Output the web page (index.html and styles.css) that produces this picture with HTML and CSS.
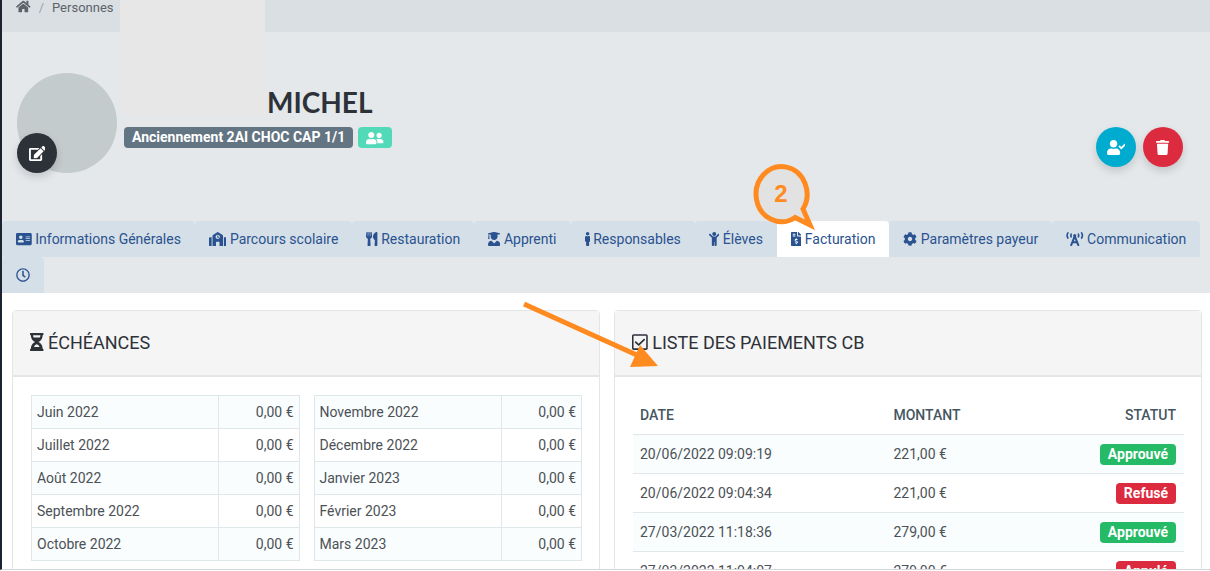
FILE: index.html
```html
<!DOCTYPE html>
<html lang="fr">
<head>
<meta charset="utf-8">
<title>Facturation - MICHEL</title>
<link rel="stylesheet" href="styles.css">
</head>
<body>
<div class="app">
  <header class="page-head">
    <nav class="breadcrumb" aria-label="Fil d'Ariane">
      <a href="#" aria-label="Accueil"><svg class="icon" viewBox="0 0 576 512"><path d="M280.37 148.26L96 300.11V464a16 16 0 0 0 16 16l112.06-.29a16 16 0 0 0 15.92-16V368a16 16 0 0 1 16-16h64a16 16 0 0 1 16 16v95.64a16 16 0 0 0 16 16.05L464 480a16 16 0 0 0 16-16V300L295.67 148.26a12.19 12.19 0 0 0-15.3 0zM571.6 251.47L488 182.56V44.05a12 12 0 0 0-12-12h-56a12 12 0 0 0-12 12v72.61L318.47 43a48 48 0 0 0-61 0L4.34 251.47a12 12 0 0 0-1.6 16.9l25.5 31A12 12 0 0 0 45.15 301l235.22-193.74a12.19 12.19 0 0 1 15.3 0L530.9 301a12 12 0 0 0 16.9-1.6l25.5-31a12 12 0 0 0-1.7-16.93z"/></svg></a>
      <span class="sep">/</span>
      <a href="#">Personnes</a>
      <span class="sep">/</span>
    </nav>
    <div class="profile">
      <div class="avatar">
        <button class="round dark" type="button" aria-label="Modifier la photo"><svg class="icon" viewBox="0 0 576 512"><path d="M402.6 83.2l90.2 90.2c3.8 3.8 3.8 10 0 13.8L274.4 405.6l-92.8 10.3c-12.4 1.4-22.9-9.1-21.5-21.5l10.3-92.8L388.8 83.2c3.8-3.8 10-3.8 13.8 0zm162-22.9l-48.8-48.8c-15.2-15.2-39.9-15.2-55.2 0l-35.4 35.4c-3.8 3.8-3.8 10 0 13.8l90.2 90.2c3.8 3.8 10 3.8 13.8 0l35.4-35.4c15.2-15.3 15.2-40 0-55.2zM384 346.2V448H64V128h229.8c3.2 0 6.2-1.3 8.5-3.5l40-40c7.6-7.6 2.2-20.5-8.5-20.5H48C21.5 64 0 85.500 0 112v352c0 26.5 21.5 48 48 48h352c26.5 0 48-21.5 48-48V306.2c0-10.7-12.9-16-20.5-8.5l-40 40c-2.2 2.3-3.5 5.3-3.5 8.5z"/></svg></button>
      </div>
      <div class="identity">
        <h1>MICHEL</h1>
        <div class="tags">
          <span class="badge slate">Anciennement 2AI CHOC CAP 1/1</span>
          <span class="badge mint"><svg class="icon" viewBox="0 0 640 512"><path d="M192 256c61.9 0 112-50.1 112-112S253.9 32 192 32 80 82.1 80 144s50.1 112 112 112zm76.8 32h-8.3c-20.8 10-43.9 16-68.5 16s-47.6-6-68.5-16h-8.3C51.600 288 0 339.600 0 403.200V432c0 26.500 21.500 48 48 48h288c26.500 0 48-21.500 48-48v-28.800c0-63.600-51.600-115.200-115.200-115.200zM480 256c53 0 96-43 96-96s-43-96-96-96-96 43-96 96 43 96 96 96zm48 32h-3.800c-13.900 4.800-28.600 8-44.200 8s-30.300-3.200-44.200-8H432c-20.400 0-39.200 5.900-55.700 15.400 24.400 26.300 39.700 61.200 39.700 99.800v38.400c0 2.200-.5 4.300-.6 6.400H592c26.500 0 48-21.500 48-48 0-61.900-50.100-112-112-112z"/></svg></span>
        </div>
      </div>
      <div class="actions">
        <button class="round cyan" type="button" aria-label="Valider la personne"><svg class="icon" viewBox="0 0 640 512"><path d="M224 256c70.7 0 128-57.3 128-128S294.7 0 224 0 96 57.3 96 128s57.3 128 128 128zm89.6 32h-16.700c-22.200 10.200-46.900 16-72.900 16s-50.600-5.800-72.900-16h-16.700C60.200 288 0 348.200 0 422.400V464c0 26.500 21.500 48 48 48h352c26.500 0 48-21.500 48-48v-41.600c0-74.200-60.200-134.400-134.400-134.400zm323-128.400l-27.800-28.100c-4.600-4.700-12.100-4.700-16.800-.1l-104.800 104-45.500-45.800c-4.600-4.700-12.100-4.700-16.800-.1l-28.100 27.900c-4.700 4.600-4.700 12.100-.1 16.800l81.700 82.300c4.600 4.700 12.100 4.700 16.800.1l141.300-140.200c4.600-4.700 4.700-12.200.1-16.800z"/></svg></button>
        <button class="round red" type="button" aria-label="Supprimer"><svg class="icon" viewBox="0 0 448 512"><path d="M432 32H312l-9.400-18.700A24 24 0 0 0 281.100 0H166.800a23.720 23.720 0 0 0-21.400 13.300L136 32H16A16 16 0 0 0 0 48v32a16 16 0 0 0 16 16h416a16 16 0 0 0 16-16V48a16 16 0 0 0-16-16zM53.200 467a48 48 0 0 0 47.900 45h245.800a48 48 0 0 0 47.900-45L416 128H32z"/></svg></button>
      </div>
    </div>
    <nav class="tabs" aria-label="Sections">
      <a class="tab" href="#"><svg class="icon" viewBox="0 0 576 512"><path d="M528 32H48C21.5 32 0 53.5 0 80v352c0 26.5 21.5 48 48 48h480c26.5 0 48-21.5 48-48V80c0-26.5-21.5-48-48-48zm-352 96c35.3 0 64 28.7 64 64s-28.7 64-64 64-64-28.7-64-64 28.7-64 64-64zm112 236.8c0 10.6-10 19.2-22.4 19.2H86.4C74 384 64 375.4 64 364.8v-19.2c0-31.8 30.1-57.6 67.2-57.6h5c12.3 5.1 25.7 8 39.8 8s27.6-2.9 39.8-8h5c37.1 0 67.2 25.8 67.2 57.6v19.2zM512 312c0 4.400-3.600 8-8 8H360c-4.400 0-8-3.600-8-8v-16c0-4.400 3.600-8 8-8h144c4.400 0 8 3.600 8 8v16zm0-64c0 4.400-3.600 8-8 8H360c-4.400 0-8-3.600-8-8v-16c0-4.400 3.600-8 8-8h144c4.400 0 8 3.600 8 8v16zm0-64c0 4.400-3.600 8-8 8H360c-4.400 0-8-3.600-8-8v-16c0-4.400 3.600-8 8-8h144c4.400 0 8 3.600 8 8v16z"/></svg> Informations Générales</a>
      <a class="tab" href="#"><svg class="icon" viewBox="0 0 640 512"><path d="M0 224v272c0 8.840 7.160 16 16 16h80V192H32c-17.670 0-32 14.330-32 32zm360-48h-24v-40c0-4.420-3.580-8-8-8h-16c-4.420 0-8 3.580-8 8v64c0 4.420 3.580 8 8 8h48c4.420 0 8-3.580 8-8v-16c0-4.420-3.580-8-8-8zm137.750-63.960l-160-106.670a32.020 32.020 0 0 0-35.500 0l-160 106.670A32.002 32.002 0 0 0 128 138.660V512h128V368c0-8.840 7.160-16 16-16h96c8.840 0 16 7.160 16 16v144h128V138.670c0-10.700-5.350-20.690-14.250-26.630zM320 256c-44.180 0-80-35.820-80-80s35.820-80 80-80 80 35.820 80 80-35.820 80-80 80zm288-64h-64v320h80c8.840 0 16-7.160 16-16V224c0-17.670-14.330-32-32-32z"/></svg> Parcours scolaire</a>
      <a class="tab" href="#"><svg class="icon" viewBox="0 0 416 512"><path d="M207.9 15.2c.8 4.7 16.1 94.5 16.1 128.8 0 52.3-27.8 89.6-68.9 104.6L168 486.700c.7 13.700-10.200 25.300-24 25.300H80c-13.700 0-24.700-11.500-24-25.300l12.900-238.100C27.700 233.600 0 196.200 0 144 0 109.600 15.300 19.900 16.100 15.200 19.300-5.100 61.400-5.400 64 16.300v141.200c1.300 3.400 15.100 3.200 16 0 1.400-25.300 7.900-139.200 8-141.800 3.300-20.800 44.700-20.800 47.900 0 .2 2.700 6.600 116.500 8 141.800.9 3.200 14.800 3.400 16 0V16.300c2.600-21.600 44.800-21.400 48-1.100zm119.200 285.700l-15 185.100c-1.200 14 9.900 26 23.900 26h56c13.300 0 24-10.700 24-24V24c0-13.200-10.700-24-24-24-82.500 0-221.400 178.500-64.900 300.900z"/></svg> Restauration</a>
      <a class="tab" href="#"><svg class="icon" viewBox="0 0 448 512"><path d="M319.4 320.6L224 416l-95.4-95.4C57.1 323.7 0 382.2 0 454.4v9.6c0 26.5 21.5 48 48 48h352c26.5 0 48-21.5 48-48v-9.6c0-72.2-57.1-130.7-128.6-133.8zM13.6 79.8l6.4 1.5v58.4c-7 4.2-12 11.5-12 20.3 0 8.4 4.6 15.4 11.1 19.7L3.5 242c-1.7 6.9 2.1 14 7.6 14h41.8c5.5 0 9.3-7.1 7.6-14l-15.6-62.3C51.4 175.4 56 168.4 56 160c0-8.8-5-16.1-12-20.3V87.1l66 15.9c-8.6 17.2-14 36.4-14 57 0 70.7 57.3 128 128 128s128-57.3 128-128c0-20.6-5.3-39.8-14-57l96.3-23.2c18.2-4.4 18.2-27.1 0-31.5l-190.400-46c-13-3.100-26.700-3.100-39.700 0L13.600 48.200c-18.100 4.400-18.100 27.200 0 31.600z"/></svg> Apprenti</a>
      <a class="tab" href="#"><svg class="icon" viewBox="0 0 192 512"><path d="M96 0c35.346 0 64 28.654 64 64s-28.654 64-64 64-64-28.654-64-64S60.654 0 96 0m48 144h-11.360c-22.711 10.443-49.590 10.894-73.280 0H48c-26.510 0-48 21.490-48 48v136c0 13.255 10.745 24 24 24h16v136c0 13.255 10.745 24 24 24h64c13.255 0 24-10.745 24-24V352h16c13.255 0 24-10.745 24-24V192c0-26.510-21.490-48-48-48z"/></svg> Responsables</a>
      <a class="tab" href="#"><svg class="icon" viewBox="0 0 384 512"><path d="M120 72c0-39.765 32.235-72 72-72s72 32.235 72 72c0 39.764-32.235 72-72 72s-72-32.236-72-72zm254.627 1.373c-12.496-12.497-32.758-12.497-45.254 0L242.745 160H141.254L54.627 73.373c-12.496-12.497-32.758-12.497-45.254 0-12.497 12.497-12.497 32.758 0 45.255L104 213.254V480c0 17.673 14.327 32 32 32h16c17.673 0 32-14.327 32-32V368h16v112c0 17.673 14.327 32 32 32h16c17.673 0 32-14.327 32-32V213.254l94.627-94.626c12.497-12.497 12.497-32.757 0-45.255z"/></svg> Élèves</a>
      <a class="tab active" href="#" aria-current="page"><svg class="icon" viewBox="0 0 384 512"><path d="M377 105L279.1 7c-4.5-4.5-10.6-7-17-7H256v128h128v-6.1c0-6.3-2.5-12.4-7-16.9zm-153 31V0H24C10.7 0 0 10.7 0 24v464c0 13.3 10.7 24 24 24h336c13.3 0 24-10.7 24-24V160H248c-13.2 0-24-10.8-24-24zM64 72c0-4.42 3.58-8 8-8h80c4.42 0 8 3.58 8 8v16c0 4.42-3.58 8-8 8H72c-4.42 0-8-3.58-8-8V72zm0 80v-16c0-4.42 3.58-8 8-8h80c4.42 0 8 3.58 8 8v16c0 4.42-3.58 8-8 8H72c-4.42 0-8-3.58-8-8zm144 263.880V440c0 4.420-3.580 8-8 8h-16c-4.420 0-8-3.580-8-8v-24.290c-11.290-.58-22.270-4.520-31.370-11.350-3.900-2.930-4.100-8.770-.57-12.140l11.750-11.210c2.770-2.640 6.890-2.760 10.130-.73 3.870 2.420 8.260 3.720 12.820 3.720h28.110c6.500 0 11.800-5.920 11.800-13.190 0-5.950-3.610-11.190-8.770-12.730l-45-13.500c-18.590-5.580-31.580-23.420-31.580-43.390 0-24.520 19.050-44.440 42.670-45.070V232c0-4.420 3.580-8 8-8h16c4.420 0 8 3.580 8 8v24.290c11.290.58 22.270 4.510 31.370 11.350 3.900 2.930 4.100 8.770.57 12.140l-11.750 11.210c-2.770 2.640-6.890 2.760-10.130.73-3.870-2.430-8.260-3.720-12.820-3.720h-28.110c-6.500 0-11.800 5.920-11.800 13.190 0 5.950 3.610 11.190 8.770 12.730l45 13.500c18.590 5.580 31.580 23.420 31.580 43.390 0 24.530-19.050 44.440-42.670 45.070z"/></svg> Facturation</a>
      <a class="tab" href="#"><svg class="icon" viewBox="0 0 512 512"><path d="M487.4 315.7l-42.6-24.6c4.3-23.2 4.3-47 0-70.2l42.6-24.6c4.9-2.8 7.1-8.6 5.5-14-11.1-35.6-30-67.8-54.7-94.6-3.8-4.1-10-5.1-14.8-2.3L380.8 110c-17.9-15.4-38.5-27.3-60.8-35.1V25.8c0-5.6-3.9-10.5-9.4-11.7-36.7-8.2-74.3-7.8-109.2 0-5.5 1.2-9.4 6.1-9.4 11.7V75c-22.2 7.9-42.8 19.8-60.8 35.1L88.7 85.5c-4.9-2.8-11-1.9-14.8 2.3-24.7 26.7-43.6 58.9-54.7 94.6-1.7 5.4.6 11.2 5.5 14L67.3 221c-4.3 23.2-4.3 47 0 70.2l-42.6 24.6c-4.9 2.8-7.1 8.6-5.5 14 11.1 35.6 30 67.8 54.7 94.6 3.8 4.1 10 5.1 14.8 2.3l42.6-24.6c17.9 15.4 38.5 27.3 60.8 35.1v49.2c0 5.6 3.9 10.5 9.4 11.7 36.7 8.2 74.3 7.8 109.2 0 5.5-1.2 9.4-6.1 9.4-11.7v-49.2c22.2-7.9 42.8-19.8 60.8-35.1l42.6 24.6c4.9 2.8 11 1.9 14.8-2.3 24.7-26.7 43.6-58.9 54.7-94.6 1.5-5.5-.7-11.3-5.6-14.1zM256 336c-44.100 0-80-35.900-80-80s35.900-80 80-80 80 35.900 80 80-35.900 80-80 80z"/></svg> Paramètres payeur</a>
      <a class="tab" href="#"><svg class="icon line" viewBox="0 0 640 512"><path stroke-width="72" d="M190 480L320 150L450 480M235 375H405"/><circle cx="320" cy="125" r="56" fill="currentColor" stroke="none"/><path stroke-width="60" d="M70 32Q10 125 70 220M570 32Q630 125 570 220M190 76Q160 125 190 176M450 76Q480 125 450 176"/></svg> Communication</a>
      <a class="tab" href="#" aria-label="Historique"><svg class="icon" viewBox="0 0 512 512"><path d="M256 8C119 8 8 119 8 256s111 248 248 248 248-111 248-248S393 8 256 8zm0 448c-110.5 0-200-89.5-200-200S145.5 56 256 56s200 89.5 200 200-89.5 200-200 200zm61.8-104.4l-84.9-61.7c-3.1-2.3-4.9-5.9-4.9-9.7V116c0-6.6 5.4-12 12-12h32c6.6 0 12 5.4 12 12v141.7l66.8 48.6c5.4 3.9 6.5 11.4 2.6 16.8L334.600 349c-3.900 5.300-11.400 6.500-16.800 2.600z"/></svg></a>
    </nav>
  </header>

  <main class="panels">
    <section class="card">
      <h2><svg class="icon" viewBox="0 0 384 512"><path fill-rule="evenodd" d="M20 0H364Q384 0 384 20V44Q384 64 360 64C360 155 310 225 240 256C310 287 360 357 360 448Q384 448 384 468V492Q384 512 364 512H20Q0 512 0 492V468Q0 448 24 448C24 357 74 287 144 256C74 225 24 155 24 64Q0 64 0 44V20Q0 0 20 0ZM88 64Q90 98 104 128H280Q294 98 296 64ZM110 400H274Q240 320 192 320Q144 320 110 400Z"/></svg> ÉCHÉANCES</h2>
      <div class="card-body months">
        <table class="grid">
          <tr><td>Juin 2022</td><td class="sum">0,00 €</td></tr>
          <tr><td>Juillet 2022</td><td class="sum">0,00 €</td></tr>
          <tr><td>Août 2022</td><td class="sum">0,00 €</td></tr>
          <tr><td>Septembre 2022</td><td class="sum">0,00 €</td></tr>
          <tr><td>Octobre 2022</td><td class="sum">0,00 €</td></tr>
        </table>
        <table class="grid">
          <tr><td>Novembre 2022</td><td class="sum">0,00 €</td></tr>
          <tr><td>Décembre 2022</td><td class="sum">0,00 €</td></tr>
          <tr><td>Janvier 2023</td><td class="sum">0,00 €</td></tr>
          <tr><td>Février 2023</td><td class="sum">0,00 €</td></tr>
          <tr><td>Mars 2023</td><td class="sum">0,00 €</td></tr>
        </table>
      </div>
    </section>
    <section class="card">
      <h2><svg class="icon line" viewBox="0 0 448 512"><rect x="22" y="54" width="404" height="404" rx="26" stroke-width="44"/><path stroke-width="48" d="M104 258L190 340L346 186"/></svg> LISTE DES PAIEMENTS CB</h2>
      <div class="card-body">
        <table class="payments">
          <thead><tr><th>DATE</th><th>MONTANT</th><th class="state">STATUT</th></tr></thead>
          <tbody>
            <tr><td>20/06/2022 09:09:19</td><td>221,00 €</td><td class="state"><span class="badge green">Approuvé</span></td></tr>
            <tr><td>20/06/2022 09:04:34</td><td>221,00 €</td><td class="state"><span class="badge red">Refusé</span></td></tr>
            <tr><td>27/03/2022 11:18:36</td><td>279,00 €</td><td class="state"><span class="badge green">Approuvé</span></td></tr>
            <tr><td>27/03/2022 11:04:07</td><td>279,00 €</td><td class="state"><span class="badge red">Annulé</span></td></tr>
          </tbody>
        </table>
      </div>
    </section>
  </main>
</div>

<div class="mask"></div>
<svg class="callout" viewBox="0 0 64 70" width="64" height="70">
  <path d="M42 54.500A25.500 27.500 0 1 1 50 46L57 62Z" fill="#e2e2e2" stroke="#ff8a20" stroke-width="5" stroke-miterlimit="10"/>
  <text x="28" y="39" text-anchor="middle">2</text>
</svg>
<svg class="arrow" viewBox="0 0 140 72" width="140" height="72">
  <path d="M5 5L120 57" stroke="#ff8a20" stroke-width="5"/>
  <path d="M139 67L111 68L121 46Z" fill="#ff8a20"/>
</svg>
</body>
</html>
```
FILE: styles.css
```css
* { box-sizing: border-box; }

body {
  margin: 0;
  height: 100vh;
  padding-bottom: 1px;
  overflow: hidden;
  position: relative;
  background: #fff;
  color: #4c5156;
  font: 14px/21px Roboto, "Liberation Sans", sans-serif;
}

a { color: inherit; text-decoration: none; }

.app {
  height: 100%;
  overflow: hidden;
  border-left: 2px solid #1b2230;
  border-bottom: 1px solid #d5d7d9;
}

.icon { height: 1em; width: auto; fill: currentColor; }
.icon.line { fill: none; stroke: currentColor; stroke-linecap: round; stroke-linejoin: round; }

.page-head { background: #e4e8eb; }

.breadcrumb {
  display: flex;
  gap: 8px;
  height: 32px;
  padding: 0 14px;
  background: #d9dfe3;
  color: #5c6369;
  font-size: 13px;
  line-height: 16px;
}
.breadcrumb .icon { height: 13px; display: block; }
.breadcrumb .sep { color: #9ba3a9; }

.profile {
  display: flex;
  gap: 7px;
  padding: 41px 27px 48px 15px;
}

.avatar {
  display: flex;
  align-items: flex-end;
  width: 100px;
  height: 100px;
  border-radius: 50%;
  background: #c4cbcd;
}

.round {
  display: flex;
  align-items: center;
  justify-content: center;
  width: 40px;
  height: 40px;
  padding: 0;
  border: 0;
  border-radius: 50%;
  color: #fff;
  font-size: 16px;
  box-shadow: 0 4px 8px rgba(0, 0, 0, 0.15);
}
.round .icon { height: 15px; }
.dark { background: #2d3138; }
.cyan { background: #00abd0; }
.red { background: #dc2a3f; }

.identity { flex: 1; padding-top: 12px; }
.identity h1 {
  margin: 0;
  padding-left: 143px;
  color: #2d3138;
  font: bold 28px/34px Lato, sans-serif;
}
.tags { display: flex; gap: 5px; margin-top: 8px; }

.badge {
  display: inline-block;
  padding: 0 8px;
  border-radius: 4px;
  color: #fff;
  font-weight: bold;
  line-height: 21px;
}
.slate { background: #637482; }
.mint { background: #52dab8; }
.mint .icon { display: block; margin-top: 4px; }
.green { background: #25ba66; }

.actions { display: flex; gap: 7px; padding-top: 54px; }

.tabs { display: flex; flex-wrap: wrap; padding-right: 8px; }
.tab {
  height: 36px;
  padding: 0 14px;
  border-radius: 4px 4px 0 0;
  background: #d5dfe7;
  color: #2a5290;
  line-height: 36px;
}
.tab .icon { vertical-align: -2px; }
.tab.active { background: #fff; }

.panels {
  display: grid;
  grid-template-columns: 1fr 1fr;
  gap: 14px;
  padding: 17px 8px 17px 10px;
}

.card {
  min-height: 300px;
  border: 1px solid #e3e6e7;
  border-radius: 4px;
}
.card h2 {
  margin: 0;
  padding: 18px 17px 19px;
  border-bottom: 2px solid #e4e5e6;
  background: #f5f5f5;
  color: #2d3138;
  font-size: 18px;
  font-weight: 400;
  line-height: 27px;
}
.card h2 .icon { vertical-align: -2px; }
.card-body { padding: 18px 17px 18px 18px; }
.months { display: grid; grid-template-columns: 1fr 1fr; gap: 14px; align-items: start; }

table { width: 100%; border-collapse: collapse; }
th, td { text-align: left; font-weight: 400; }

.grid td { height: 33px; padding: 0 5px; border: 1px solid #dfe7ea; }
.grid tr:nth-child(odd) { background: #f9fdfe; }
.grid .sum { width: 30%; text-align: right; }

.payments { table-layout: fixed; }
.payments th, .payments td { height: 39px; padding: 1px 8px 0 7px; border-bottom: 1px solid #dfe7ea; }
.payments th { padding-top: 2px; width: 27%; color: #455661; font-weight: 500; }
.payments th:first-child { width: 46%; }
.payments tbody tr:nth-child(odd) { background: #f9fdfe; }
.payments .state { text-align: right; }

.mask {
  position: absolute;
  top: 0;
  left: 120px;
  width: 145px;
  height: 115px;
  background: #e7e7e7;
}
.callout { position: absolute; left: 753px; top: 163px; }
.callout text { fill: #ff8a20; font: bold 24px "Liberation Sans", sans-serif; }
.arrow { position: absolute; left: 519px; top: 299px; fill: none; }
```
